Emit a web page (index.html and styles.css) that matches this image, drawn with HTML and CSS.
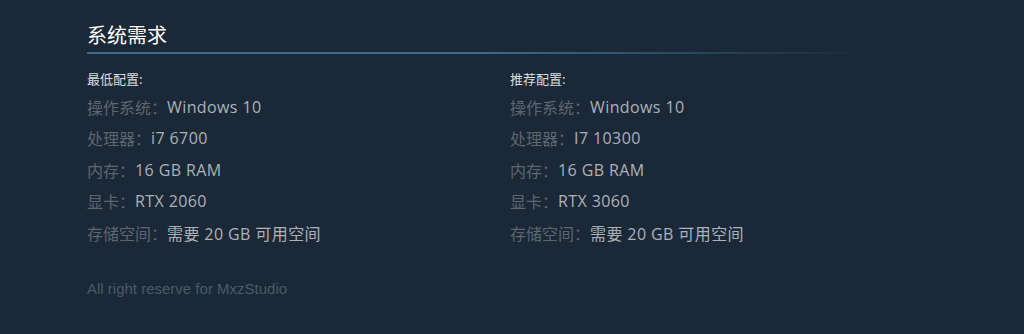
FILE: index.html
```html
<!DOCTYPE html>
<html lang="zh-CN">
<head>
<meta charset="utf-8">
<title>系统需求</title>
<link rel="stylesheet" href="styles.css">
</head>
<body>
<div class="page">
  <section class="sysreq">
    <h2 class="title">系统需求</h2>
    <div class="cols">
      <div class="col">
        <div class="sub">最低配置:</div>
        <ul class="list">
          <li><span class="k">操作系统：</span><span class="v">Windows 10</span></li>
          <li><span class="k">处理器：</span><span class="v">i7 6700</span></li>
          <li><span class="k">内存：</span><span class="v">16 GB RAM</span></li>
          <li><span class="k">显卡：</span><span class="v">RTX 2060</span></li>
          <li><span class="k">存储空间：</span><span class="v">需要 20 GB 可用空间</span></li>
        </ul>
      </div>
      <div class="col">
        <div class="sub">推荐配置:</div>
        <ul class="list">
          <li><span class="k">操作系统：</span><span class="v">Windows 10</span></li>
          <li><span class="k">处理器：</span><span class="v">I7 10300</span></li>
          <li><span class="k">内存：</span><span class="v">16 GB RAM</span></li>
          <li><span class="k">显卡：</span><span class="v">RTX 3060</span></li>
          <li><span class="k">存储空间：</span><span class="v">需要 20 GB 可用空间</span></li>
        </ul>
      </div>
    </div>
    <p class="footer">All right reserve for MxzStudio</p>
  </section>
</div>
</body>
</html>
```

FILE: styles.css
```css
html, body {
  margin: 0;
  padding: 0;
  background: #1b2838;
}
body {
  font-family: "Open Sans", "Noto Sans CJK SC", sans-serif;
  height: 334px;
  overflow: hidden;
}
.page {
  padding: 20px 0 0 87px;
}
.sysreq {
  width: 846px;
}
.title {
  margin: 0;
  font-family: "Noto Sans CJK SC", sans-serif;
  font-weight: normal;
  font-size: 20px;
  line-height: 30px;
  color: #ffffff;
}
.title::after {
  content: "";
  display: block;
  margin-top: 2px;
  height: 2px;
  width: 780px;
  background: linear-gradient(to right, #3b6e8c 0%, #3b6e8c 50%, rgba(59,110,140,0) 100%);
}
.cols {
  display: grid;
  grid-template-columns: 423px 423px;
  margin-top: 15px;
}
.sub {
  font-family: "Noto Sans CJK SC", sans-serif;
  font-size: 13px;
  line-height: 20px;
  color: #dcdedf;
}
.list {
  list-style: none;
  margin: 2px 0 0;
  padding: 0;
}
.list li {
  display: flex;
  align-items: center;
  height: 31.5px;
  font-size: 16px;
  white-space: nowrap;
}
.k {
  color: #5e6670;
  font-family: "Noto Sans CJK SC", sans-serif;
}
.v {
  color: #acb2b8;
  letter-spacing: 0.4px;
  font-family: "Open Sans", "Noto Sans CJK SC", sans-serif;
}
.footer {
  margin: 30px 0 0;
  font-family: "Liberation Sans", Arial, sans-serif;
  font-size: 15px;
  line-height: 20px;
  color: #4b5a68;
}
```
